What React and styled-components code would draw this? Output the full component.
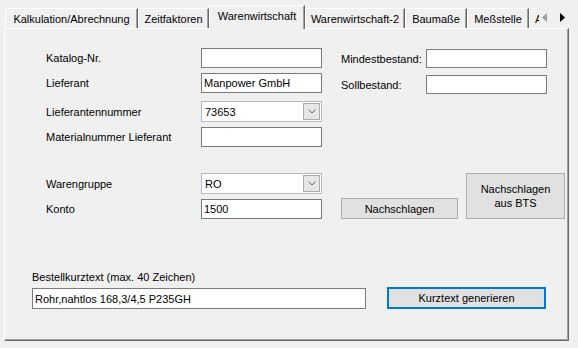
import React from 'react';
import styled, { createGlobalStyle } from 'styled-components';

const GlobalStyle = createGlobalStyle`
  html, body {
    margin: 0;
    padding: 0;
    background: #f0f0f0;
  }
  body {
    font-family: "Liberation Sans", Arial, sans-serif;
    font-size: 11px;
    color: #000;
  }
`;

const Window = styled.div`
  width: 578px;
  height: 348px;
  background: #f0f0f0;
  overflow: hidden;
`;

const TabStrip = styled.div`
  display: flex;
  align-items: flex-end;
  height: 28px;
  padding-left: 5px;
`;

const Tab = styled.div`
  box-sizing: border-box;
  flex: none;
  width: ${p => p.$w}px;
  height: ${p => (p.$active ? 24 : 20)}px;
  margin-bottom: ${p => (p.$active ? -1 : 0)}px;
  position: ${p => (p.$active ? 'relative' : 'static')};
  z-index: ${p => (p.$active ? 1 : 0)};
  display: flex;
  align-items: ${p => (p.$active ? 'flex-start' : 'center')};
  justify-content: ${p => (p.$clip ? 'flex-start' : 'center')};
  padding-top: ${p => (p.$active ? 4 : 0)}px;
  padding-left: ${p => (p.$clip ? 5 : 0)}px;
  overflow: hidden;
  white-space: nowrap;
  background: #f0f0f0;
  border-top: 1px solid #fff;
  border-left: 1px solid #fff;
  border-right: ${p => (p.$clip ? 'none' : '1px solid #696969')};
  box-shadow: ${p => (p.$clip ? 'none' : 'inset -1px 0 0 #a0a0a0')};
`;

const Scroller = styled.div`
  display: flex;
  align-items: center;
  gap: 13px;
  height: 20px;
  margin-left: 3px;
  align-self: flex-end;
  padding-bottom: 1px;
`;

const Panel = styled.div`
  box-sizing: border-box;
  width: 565px;
  height: 313px;
  margin-left: 4px;
  padding: 19px 0 0 27px;
  display: flex;
  flex-direction: column;
  border-top: 1px solid #fff;
  border-left: 1px solid #fff;
  border-right: 1px solid #696969;
  border-bottom: 1px solid #696969;
  box-shadow: inset -1px -1px 0 #a0a0a0;
`;

const Section = styled.div`
  display: flex;
  align-items: ${p => p.$align || 'flex-start'};
  margin-left: ${p => p.$ml || 0}px;
  margin-top: ${p => p.$mt || 0}px;
`;

const Column = styled.div`
  display: flex;
  flex-direction: column;
  margin-left: ${p => p.$ml || 0}px;
  padding-top: ${p => p.$pt || 0}px;
`;

const Row = styled.div`
  display: flex;
  align-items: center;
  height: ${p => p.$h || 20}px;
  margin-top: ${p => p.$mt || 0}px;
`;

const Label = styled.div`
  flex: none;
  width: ${p => p.$w}px;
  white-space: nowrap;
`;

const TextBox = styled.div`
  box-sizing: border-box;
  flex: none;
  width: ${p => p.$w || 121}px;
  height: ${p => p.$h || 20}px;
  background: #fff;
  border: 1px solid #7a7a7a;
  padding-left: 2px;
  display: flex;
  align-items: center;
  white-space: nowrap;
`;

const Combo = styled.div`
  box-sizing: border-box;
  flex: none;
  width: 121px;
  height: 21px;
  background: #fff;
  border: 1px solid #b9b9b9;
  padding: 1px 1px 1px 3px;
  display: flex;
  align-items: center;
  justify-content: space-between;
`;

const DropButton = styled.div`
  box-sizing: border-box;
  width: 17px;
  height: 17px;
  background: #e6e6e6;
  border: 1px solid #acacac;
  display: flex;
  align-items: center;
  justify-content: center;
`;

const Button = styled.div`
  box-sizing: border-box;
  flex: none;
  width: ${p => p.$w}px;
  height: ${p => p.$h}px;
  margin-left: ${p => p.$ml || 0}px;
  align-self: ${p => p.$self || 'auto'};
  background: #e1e1e1;
  border: ${p => (p.$focused ? '2px solid #0078d7' : '1px solid #adadad')};
  display: flex;
  align-items: center;
  justify-content: center;
  text-align: center;
  line-height: 14px;
`;

const Caption = styled.div`
  line-height: 13px;
  margin-top: ${p => p.$mt || 0}px;
`;

const Chevron = () => (
  <svg width="8" height="5" viewBox="0 0 8 5">
    <path d="M0.5 0.5 L4 4 L7.5 0.5" fill="none" stroke="#606060" strokeWidth="1" />
  </svg>
);

const ArrowLeft = () => (
  <svg width="5" height="9" viewBox="0 0 5 9">
    <path d="M5 0 L0 4.5 L5 9 Z" fill="#a0a0a0" />
  </svg>
);

const ArrowRight = () => (
  <svg width="5" height="9" viewBox="0 0 5 9">
    <path d="M0 0 L5 4.5 L0 9 Z" fill="#000" />
  </svg>
);

const tabs = [
  { label: 'Kalkulation/Abrechnung', w: 133 },
  { label: 'Zeitfaktoren', w: 71 },
  { label: 'Warenwirtschaft', w: 96, active: true },
  { label: 'Warenwirtschaft-2', w: 100 },
  { label: 'Baumaße', w: 62 },
  { label: 'Meßstelle', w: 62 },
];

const App = () => (
  <Window>
    <GlobalStyle />
    <TabStrip>
      {tabs.map(t => (
        <Tab key={t.label} $w={t.w} $active={t.active}>
          {t.label}
        </Tab>
      ))}
      <Tab $w={10} $clip>Allgemein</Tab>
      <Scroller>
        <ArrowLeft />
        <ArrowRight />
      </Scroller>
    </TabStrip>

    <Panel>
      <Section $ml={14}>
        <Column>
          <Row>
            <Label $w={155}>Katalog-Nr.</Label>
            <TextBox />
          </Row>
          <Row $mt={5}>
            <Label $w={155}>Lieferant</Label>
            <TextBox>Manpower GmbH</TextBox>
          </Row>
          <Row $mt={8} $h={21}>
            <Label $w={155}>Lieferantennummer</Label>
            <Combo>
              73653
              <DropButton><Chevron /></DropButton>
            </Combo>
          </Row>
          <Row $mt={5}>
            <Label $w={155}>Materialnummer Lieferant</Label>
            <TextBox />
          </Row>
        </Column>
        <Column $ml={19} $pt={1}>
          <Row $h={19}>
            <Label $w={85}>Mindestbestand:</Label>
            <TextBox $h={19} />
          </Row>
          <Row $h={19} $mt={7}>
            <Label $w={85}>Sollbestand:</Label>
            <TextBox $h={19} />
          </Row>
        </Column>
      </Section>

      <Section $ml={14} $mt={26} $align="stretch">
        <Column>
          <Row $h={21}>
            <Label $w={155}>Warengruppe</Label>
            <Combo>
              RO
              <DropButton><Chevron /></DropButton>
            </Combo>
          </Row>
          <Row $mt={5}>
            <Label $w={155}>Konto</Label>
            <TextBox>1500</TextBox>
          </Row>
        </Column>
        <Button $w={117} $h={21} $ml={19} $self="flex-end">Nachschlagen</Button>
        <Button $w={99} $h={46} $ml={8}>Nachschlagen<br />aus BTS</Button>
      </Section>

      <Caption $mt={52}>Bestellkurztext (max. 40 Zeichen)</Caption>
      <Section $mt={3} $align="flex-end">
        <TextBox $w={334} $h={21}>Rohr,nahtlos 168,3/4,5 P235GH</TextBox>
        <Button $w={159} $h={22} $ml={21} $focused>Kurztext generieren</Button>
      </Section>
    </Panel>
  </Window>
);

export default App;
